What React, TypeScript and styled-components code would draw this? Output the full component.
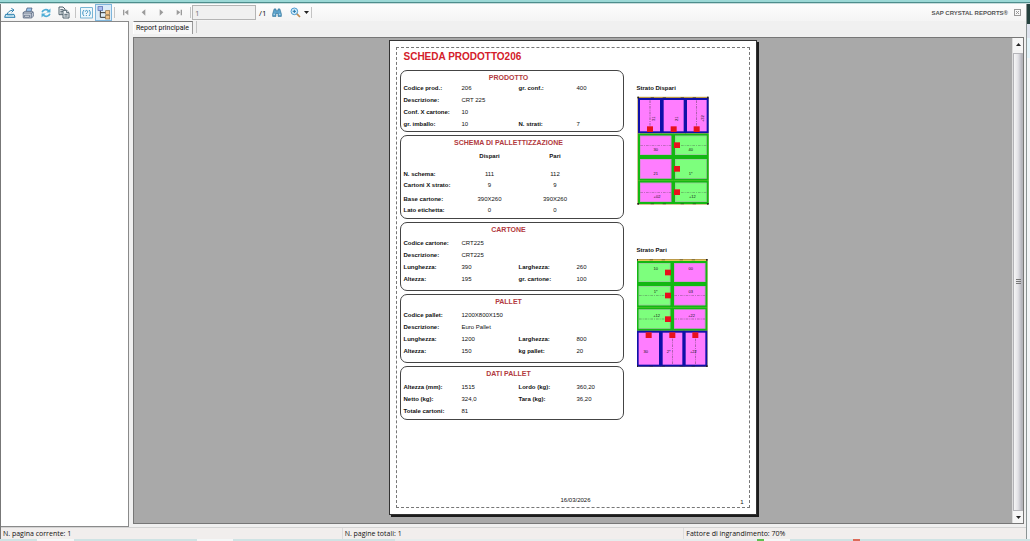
import React from 'react';
import styled, { createGlobalStyle } from 'styled-components';

const Global = createGlobalStyle`
  * { box-sizing: border-box; }
  html, body { margin: 0; padding: 0; }
  body { font-family: "Open Sans", "Noto Sans", sans-serif; font-size: 7px; color: #111; background: #f0f0f0; }
  button, input { font: inherit; color: inherit; margin: 0; }
`;

const Desktop = styled.div`
  display: flex;
  flex-direction: column;
  min-height: 100vh;
`;

const TopEdge = styled.div`
  height: 4px;
  flex: none;
  background: linear-gradient(#9bd8d6 0 2px, #4d8d8c 2px 3px, #c8dcdc 3px 4px);
`;

const Middle = styled.div`
  display: flex;
  flex: 1;
`;

const Window = styled.main`
  display: flex;
  flex-direction: column;
  flex: 1;
  min-width: 0;
  background: #f0f0f0;
  border-left: 1px solid #777;
  border-right: 1px solid #8b9494;
`;

const SideEdge = styled.div`
  width: 3px;
  flex: none;
  background: linear-gradient(#24403d 0 20px, #dfe3ee 20px 34px, #e4f3f9 34px 54px, #f3f5f7 54px);
`;

const BottomEdge = styled.div`
  height: 2px;
  flex: none;
  background: linear-gradient(90deg, #cfe3e4 0 37px, #f4f7f7 37px 74px, #cfe3e4 74px 197px, #f4f7f7 197px 233px, #cfe3e4 233px 395px, #e6eded 395px 757px, #5fc04f 757px 764px, #f4f7f7 764px 790px, #cfe3e4 790px 853px, #dc6a58 853px 860px, #cfe3e4 860px);
`;

const Toolbar = styled.div`
  display: flex;
  align-items: center;
  height: 17px;
  flex: none;
  padding-right: 5px;
  background: linear-gradient(#fdfdfd, #f4f4f4);
`;

const ToolButton = styled.button<{ $active?: boolean }>`
  display: flex;
  align-items: center;
  justify-content: center;
  width: ${(p) => (p.$active ? 17 : 18)}px;
  height: 17px;
  padding: 0;
  border: 1px solid ${(p) => (p.$active ? '#7fb6dc' : 'transparent')};
  background: ${(p) => (p.$active ? '#dcecf8' : 'transparent')};
  svg { display: block; flex: none; }
`;

const Divider = styled.span`
  width: 1px;
  height: 11px;
  margin: 0 1px 0 2px;
  background: #c4c4c4;
`;

const PageInput = styled.input`
  width: 64px;
  height: 15px;
  padding: 0 2px;
  border: 1px solid #b4b4b4;
  background: #f0f0f0;
  color: #777;
  font-size: 8px;
`;

const PageTotal = styled.span`
  width: 12px;
  padding-left: 3px;
  font-size: 8px;
`;

const Brand = styled.span`
  margin-left: auto;
  margin-right: 6px;
  font: bold 6px "Liberation Sans", Arial, sans-serif;
  color: #555;
  white-space: nowrap;
`;

const CloseButton = styled.button`
  width: 7px;
  height: 7px;
  padding: 0;
  border: 0;
  background: none;
  svg { display: block; }
`;

const Body = styled.div`
  display: flex;
  flex: 1;
`;

const TreePanel = styled.aside`
  width: 128px;
  flex: none;
  background: #fff;
  border: 1px solid #8a8a8a;
  border-left: 0;
`;

const Content = styled.section`
  display: flex;
  flex-direction: column;
  flex: 1;
  min-width: 0;
  padding: 0 2px 3px 4px;
`;

const TabBar = styled.div`
  display: flex;
  height: 16px;
  flex: none;
`;

const Tab = styled.button`
  height: 13px;
  padding: 0 3px 0 2px;
  border: 0;
  border-left: 1px solid #fff;
  border-top: 1px solid #777;
  border-right: 1px solid #999;
  background: #f7f7f7;
  font-family: Roboto, sans-serif;
  line-height: 12px;
  white-space: nowrap;
`;

const TabEnd = styled.span`
  width: 1px;
  height: 12px;
  margin-left: 3px;
  background: #c4c4c4;
`;

const Viewer = styled.div`
  display: flex;
  flex: 1;
  border: 1px solid #777;
`;

const Canvas = styled.div`
  display: flex;
  flex: 1;
  justify-content: center;
  align-items: flex-start;
  padding: 2px 1px 6px 0;
  background: #a9a9a9;
`;

const ScrollBar = styled.div`
  display: flex;
  flex-direction: column;
  width: 11px;
  flex: none;
  background: #f3f3f3;
  border-left: 1px solid #dcdcdc;
`;

const ScrollButton = styled.button`
  height: 12px;
  padding: 0;
  border: 0;
  background: #f6f6f6;
  svg { display: block; margin: 0 auto; }
`;

const Thumb = styled.div`
  display: flex;
  align-items: center;
  justify-content: center;
  flex: 1;
  margin-top: 3px;
  border: 1px solid #b4b4b8;
  background: linear-gradient(90deg, #f6f6f6, #e2e2e6 50%, #b2b2ba);
`;

const Paper = styled.article`
  width: 368px;
  padding: 6px;
  background: #fff;
  border: 1px solid #333;
  box-shadow: 2px 2px 0 #1c1c1c;
  font-family: "Liberation Sans", Arial, sans-serif;
  font-size: 6px;
  color: #111;
`;

const Margins = styled.div`
  display: flex;
  flex-direction: column;
  height: 461px;
  padding: 4px 3px 0;
  border: 1px dashed #777;
`;

const Title = styled.h1`
  margin: 0 4px 8px;
  font-size: 10px;
  line-height: 10px;
  color: #d3202a;
`;

const Columns = styled.div`
  display: flex;
  gap: 13px;
`;

const Sections = styled.div`
  display: flex;
  flex-direction: column;
  gap: 3px;
  width: 224px;
`;

const Box = styled.section<{ $height: number }>`
  min-height: ${(p) => p.$height}px;
  padding: 2px 3px 0;
  border: 1px solid #444;
  border-radius: 7px;
`;

const BoxTitle = styled.h2<{ $gap: number }>`
  margin: 0 0 ${(p) => p.$gap}px 0;
  padding-right: 6px;
  font-size: 7px;
  line-height: 10px;
  text-align: center;
  color: #b23a40;
`;

const Fields = styled.dl`
  display: grid;
  grid-template-columns: 58px 57px 58px 1fr;
  grid-auto-rows: 12px;
  margin: 0;
  line-height: 12px;
  white-space: nowrap;
`;

const Term = styled.dt<{ $col: number }>`
  grid-column: ${(p) => p.$col};
  font-weight: bold;
`;

const Value = styled.dd<{ $col: number }>`
  grid-column: ${(p) => p.$col};
  margin: 0;
`;

const SchemaTable = styled.table`
  width: 184px;
  border-collapse: collapse;
  table-layout: fixed;
  line-height: 11px;
  white-space: nowrap;
  th, td { padding: 0; text-align: center; vertical-align: top; }
  tbody th { text-align: left; }
`;

const SchemaRow = styled.tr<{ $height: number }>`
  height: ${(p) => p.$height}px;
`;

const Diagrams = styled.div`
  padding-top: 13px;
`;

const Figure = styled.figure`
  height: 162px;
  margin: 0;
  svg { display: block; }
`;

const Caption = styled.figcaption`
  height: 13px;
  line-height: 10px;
  font-weight: bold;
`;

const Footer = styled.footer`
  display: grid;
  grid-template-columns: 1fr auto 1fr;
  margin-top: auto;
  line-height: 10px;
  padding: 0 2px 0 8px;
`;

const PrintDate = styled.span`
  padding-bottom: 2px;
`;

const PageNumber = styled.span`
  align-self: end;
  text-align: right;
`;

const StatusBar = styled.footer`
  display: grid;
  grid-template-columns: 1fr 1fr 1fr;
  height: 12px;
  flex: none;
  line-height: 12px;
  background: #f1eeed;
  border-top: 1px solid #d4d4d4;
`;

const StatusCell = styled.span`
  padding-left: 2px;
  border-right: 1px solid #dcdcdc;
  white-space: nowrap;
  &:last-child { border-right: 0; }
`;

type Item = [string, string, (string | undefined)?, (string | undefined)?];

function Details({ title, rows, height, gap }: { title: string; rows: Item[]; height: number; gap: number }) {
  return (
    <Box $height={height}>
      <BoxTitle $gap={gap}>{title}</BoxTitle>
      <Fields>
        {rows.map(([a, b, c, d]) => (
          <React.Fragment key={a}>
            <Term $col={1}>{a}</Term>
            <Value $col={2}>{b}</Value>
            {c && <Term $col={3}>{c}</Term>}
            {c && <Value $col={4}>{d}</Value>}
          </React.Fragment>
        ))}
      </Fields>
    </Box>
  );
}

const PINK = '#ff7dff';
const GREEN = '#7dff7d';
const NAVY = '#1010a8';
const LEAF = '#12b812';

interface Carton {
  x: number; y: number; w: number; h: number;
  fill: string; stroke: string;
  tag: [number, number]; label: string; at: [number, number];
  turn?: boolean; dash?: 'h' | 'v'; dashAt?: number;
}

function Layer({ cartons, viewBox, edge, title }: { cartons: Carton[]; viewBox: string; edge: [number, number]; title: string }) {
  return (
    <svg width="72" height="109" viewBox={viewBox} role="img" aria-label={title}>
      <rect x={edge[0]} y={edge[1]} width="210" height="320" fill="#e8d860" stroke="#b08a30" strokeWidth="3" />
      {cartons.map((c, i) => (
        <g key={i}>
          <rect x={c.x} y={c.y} width={c.w} height={c.h} fill={c.fill} stroke={c.stroke} strokeWidth="6" />
          {c.stroke === LEAF && (
            <rect x={c.x + 4} y={c.y + 4} width={c.w - 8} height={c.h - 8} fill="none" stroke="#b0a0b0" strokeWidth="2" opacity="0.7" />
          )}
          {c.dash === 'h' && (
            <line x1={c.x + 4} x2={c.x + c.w - 4} y1={c.dashAt} y2={c.dashAt} stroke="#444" strokeWidth="2" strokeDasharray="8 3 3 3" opacity="0.6" />
          )}
          {c.dash === 'v' && (
            <line y1={c.y + 4} y2={c.y + c.h - 4} x1={c.dashAt} x2={c.dashAt} stroke="#333" strokeWidth="2" strokeDasharray="8 3 3 3" opacity="0.7" />
          )}
          {c.tag[0] > 0 && <rect x={c.tag[0] - 9} y={c.tag[1] - 8} width="18" height="17" fill="#e8101c" />}
          <text
            x={c.at[0]} y={c.at[1] + 4} fontSize="12" textAnchor="middle" fill="#111"
            transform={c.turn ? `rotate(-90 ${c.at[0]} ${c.at[1]})` : undefined}
          >{c.label}</text>
        </g>
      ))}
      {[0, 1].map((k) => (
        <g key={k} fill="#222">
          <rect x={edge[0] - 2} y={edge[1] - 2 + k * 319} width="5" height="5" />
          <rect x={edge[0] + 207} y={edge[1] - 2 + k * 319} width="5" height="5" />
          {[38, 74, 128, 164].map((d) => (
            <rect key={d} x={edge[0] + d} y={edge[1] - 1 + k * 319} width="10" height="3" opacity="0.45" />
          ))}
        </g>
      ))}
    </svg>
  );
}

const dispari: Carton[] = [
  { x: 42, y: 72, w: 66, h: 100, fill: PINK, stroke: NAVY, tag: [75, 162], label: '31', at: [85, 131], turn: true, dash: 'v', dashAt: 75 },
  { x: 113, y: 72, w: 66, h: 100, fill: PINK, stroke: NAVY, tag: [146, 162], label: '21', at: [155, 131], turn: true },
  { x: 183, y: 72, w: 65, h: 100, fill: PINK, stroke: NAVY, tag: [215, 162], label: '+32', at: [232, 131], turn: true, dash: 'v', dashAt: 215 },
  { x: 42, y: 179, w: 100, h: 64, fill: PINK, stroke: LEAF, tag: [0, 0], label: '30', at: [92, 223], dash: 'h', dashAt: 211 },
  { x: 147, y: 179, w: 101, h: 64, fill: GREEN, stroke: LEAF, tag: [156, 210], label: '40', at: [197, 223], dash: 'h', dashAt: 211 },
  { x: 42, y: 249, w: 100, h: 65, fill: PINK, stroke: LEAF, tag: [0, 0], label: '21', at: [92, 295] },
  { x: 147, y: 249, w: 101, h: 65, fill: GREEN, stroke: LEAF, tag: [156, 281], label: '1*', at: [197, 295] },
  { x: 42, y: 320, w: 100, h: 64, fill: PINK, stroke: LEAF, tag: [0, 0], label: '+02', at: [96, 366], dash: 'h', dashAt: 352 },
  { x: 147, y: 320, w: 101, h: 64, fill: GREEN, stroke: LEAF, tag: [156, 351], label: '+12', at: [202, 366], dash: 'h', dashAt: 352 },
];

const pari: Carton[] = [
  { x: 38, y: 66, w: 101, h: 63, fill: GREEN, stroke: LEAF, tag: [129, 97], label: '10', at: [92, 86] },
  { x: 144, y: 66, w: 100, h: 63, fill: PINK, stroke: LEAF, tag: [0, 0], label: '00', at: [197, 86] },
  { x: 38, y: 135, w: 101, h: 64, fill: GREEN, stroke: LEAF, tag: [129, 166], label: '1*', at: [92, 156], dash: 'h', dashAt: 167 },
  { x: 144, y: 135, w: 100, h: 64, fill: PINK, stroke: LEAF, tag: [0, 0], label: '03', at: [197, 156], dash: 'h', dashAt: 167 },
  { x: 38, y: 205, w: 101, h: 64, fill: GREEN, stroke: LEAF, tag: [129, 237], label: '+12', at: [95, 226], dash: 'h', dashAt: 237 },
  { x: 144, y: 205, w: 100, h: 64, fill: PINK, stroke: LEAF, tag: [0, 0], label: '+22', at: [200, 226], dash: 'h', dashAt: 237 },
  { x: 38, y: 275, w: 67, h: 102, fill: PINK, stroke: NAVY, tag: [71, 285], label: '30', at: [62, 335] },
  { x: 110, y: 275, w: 65, h: 102, fill: PINK, stroke: NAVY, tag: [142, 285], label: '2*', at: [131, 335], dash: 'v', dashAt: 142 },
  { x: 179, y: 275, w: 65, h: 102, fill: PINK, stroke: NAVY, tag: [211, 285], label: '+22', at: [205, 335], dash: 'v', dashAt: 211 },
];

const ExportIcon = () => (
  <svg width="12" height="12" viewBox="0 0 36 36" fill="none" stroke="#2b7fae" strokeWidth="3">
    <path d="M5 22 L2 31 H33 L30 22 Z" fill="#d5ecf6" />
    <path d="M9 23 C12 14 18 10 26 10" />
    <path d="M22 4 L30 9 L23 16" />
    <path d="M10 26 H26" stroke="#7db9d4" strokeWidth="2" />
  </svg>
);
const PrintIcon = () => (
  <svg width="12" height="12" viewBox="0 0 36 36" stroke="#3c4f6b" strokeWidth="2">
    <path d="M12 14 L15 3 H30 L27 14 Z" fill="#9cc6ee" />
    <path d="M3 17 L9 13 H31 L34 17 V28 L28 33 H4 Z" fill="#cfd6df" />
    <path d="M3 18 H28 V32 M28 18 L34 15" fill="none" />
    <path d="M7 25 H23 V30 H7 Z" fill="#fff" />
  </svg>
);
const RefreshIcon = () => (
  <svg width="10" height="10" viewBox="0 0 36 36" fill="none" stroke="#4fadd6" strokeWidth="6">
    <path d="M4 15 C7 5 20 3 28 10" /><path d="M34 2 V16 H19 Z" fill="#4fadd6" stroke="none" />
    <path d="M32 21 C29 31 16 33 8 26" /><path d="M2 34 V20 H17 Z" fill="#4fadd6" stroke="none" />
  </svg>
);
const CopyIcon = () => (
  <svg width="12" height="13" viewBox="0 0 36 39" fill="#f3f6f8" stroke="#51626d" strokeWidth="3">
    <path d="M3 3 H15 L21 9 V26 H3 Z" /><path d="M7 11 H16 M7 16 H16 M7 21 H13" />
    <path d="M15 13 H26 L33 20 V36 H15 Z" /><path d="M26 13 V20 H33 M19 25 H29 M19 30 H29" />
  </svg>
);
const ParamIcon = () => (
  <svg width="13" height="12" viewBox="0 0 39 36" fill="none" stroke="#3b93c2" strokeWidth="2">
    <rect x="2" y="2" width="35" height="31" fill="#eef8fd" />
    <path d="M12 9 C7 14 7 22 12 27 M27 9 C32 14 32 22 27 27" strokeWidth="3" />
    <path d="M16 14 C16 9 23 9 23 14 C23 17 19 17 19 21 M19 24 V27" strokeWidth="3" />
  </svg>
);
const TreeIcon = () => (
  <svg width="14" height="14" viewBox="0 0 42 42" stroke="#555" strokeWidth="2" fill="none">
    <path d="M10 13 V34 H26 M10 20 H26" stroke="#333" strokeWidth="3" />
    <rect x="3" y="2" width="14" height="11" fill="#a9bdf0" stroke="#4b62a5" />
    <rect x="26" y="14" width="12" height="11" fill="#f2c48a" stroke="#8d6a3c" />
    <rect x="26" y="28" width="12" height="11" fill="#f2c48a" stroke="#8d6a3c" />
  </svg>
);
const NavIcon = ({ back, bar }: { back?: boolean; bar?: boolean }) => (
  <svg width="7" height="7" viewBox="0 0 21 21" fill="#9b9b9b">
    <g transform={back ? 'translate(21 0) scale(-1 1)' : undefined}>
      <path d={bar ? 'M2 2 L13 10 L2 19 Z' : 'M5 1 L16 10 L5 20 Z'} />
      {bar && <path d="M14 2 H18 V19 H14 Z" />}
    </g>
  </svg>
);
const FindIcon = () => (
  <svg width="10" height="9" viewBox="0 0 33 30" fill="#5fa5cd" stroke="#23688f" strokeWidth="2">
    <path d="M7 3 H13 V9 H20 V3 H26 L31 20 V28 H20 V18 H13 V28 H2 V20 Z" />
    <path d="M5 21 H10 M23 21 H28" stroke="#c8e6f5" strokeWidth="3" />
  </svg>
);
const ZoomIcon = () => (
  <svg width="11" height="11" viewBox="0 0 33 33" fill="none">
    <path d="M20 20 L30 30" stroke="#c08a50" strokeWidth="5" />
    <circle cx="13" cy="13" r="10" fill="#d6eefa" stroke="#4a9bd0" strokeWidth="3" />
    <path d="M13 8 V18 M8 13 H18" stroke="#2878ad" strokeWidth="3" />
  </svg>
);
const Triangle = ({ up }: { up?: boolean }) => (
  <svg width="5" height="3" viewBox="0 0 10 6"><path d={up ? 'M0 6 L5 0 L10 6 Z' : 'M0 0 H10 L5 6 Z'} fill="#222" /></svg>
);

export default function App() {
  return (
    <Desktop>
      <Global />
      <TopEdge />
      <Middle>
        <Window>
          <Toolbar role="toolbar" aria-label="Report">
            <ToolButton aria-label="Esporta"><ExportIcon /></ToolButton>
            <ToolButton aria-label="Stampa"><PrintIcon /></ToolButton>
            <ToolButton aria-label="Aggiorna"><RefreshIcon /></ToolButton>
            <ToolButton aria-label="Copia"><CopyIcon /></ToolButton>
            <Divider />
            <ToolButton aria-label="Parametri"><ParamIcon /></ToolButton>
            <ToolButton $active aria-label="Struttura gruppi" aria-pressed="true"><TreeIcon /></ToolButton>
            <Divider />
            <ToolButton aria-label="Prima pagina"><NavIcon back bar /></ToolButton>
            <ToolButton aria-label="Pagina precedente"><NavIcon back /></ToolButton>
            <ToolButton aria-label="Pagina successiva"><NavIcon /></ToolButton>
            <ToolButton aria-label="Ultima pagina"><NavIcon bar /></ToolButton>
            <Divider />
            <PageInput aria-label="Pagina" defaultValue="1" />
            <PageTotal>/1</PageTotal>
            <ToolButton aria-label="Trova"><FindIcon /></ToolButton>
            <ToolButton aria-label="Zoom"><ZoomIcon /></ToolButton>
            <Triangle />
            <Divider />
            <Brand>SAP CRYSTAL REPORTS®</Brand>
            <CloseButton aria-label="Chiudi">
              <svg width="7" height="7" viewBox="0 0 14 14" fill="none" stroke="#999" strokeWidth="2">
                <rect x="1" y="1" width="12" height="12" /><path d="M4 4 L10 10 M10 4 L4 10" />
              </svg>
            </CloseButton>
          </Toolbar>
          <Body>
            <TreePanel />
            <Content>
              <TabBar role="tablist"><Tab role="tab" aria-selected="true">Report principale</Tab><TabEnd /></TabBar>
              <Viewer>
                <Canvas>
                  <Paper>
                    <Margins>
                      <Title>SCHEDA PRODOTTO206</Title>
                      <Columns>
                        <Sections>
                          <Details title="PRODOTTO" height={62} gap={-1} rows={[
                            ['Codice prod.:', '206', 'gr. conf.:', '400'],
                            ['Descrizione:', 'CRT 225'],
                            ['Conf. X cartone:', '10'],
                            ['gr. imballo:', '10', 'N. strati:', '7'],
                          ]} />
                          <Box $height={84}>
                            <BoxTitle $gap={3}>SCHEMA DI PALLETTIZZAZIONE</BoxTitle>
                            <SchemaTable>
                              <colgroup><col width="53" /><col width="66" /><col width="65" /></colgroup>
                              <thead><SchemaRow $height={18}><td /><th>Dispari</th><th>Pari</th></SchemaRow></thead>
                              <tbody>
                                <SchemaRow $height={11}><th>N. schema:</th><td>111</td><td>112</td></SchemaRow>
                                <SchemaRow $height={14}><th>Cartoni X strato:</th><td>9</td><td>9</td></SchemaRow>
                                <SchemaRow $height={11}><th>Base cartone:</th><td>390X260</td><td>390X260</td></SchemaRow>
                                <SchemaRow $height={11}><th>Lato etichetta:</th><td>0</td><td>0</td></SchemaRow>
                              </tbody>
                            </SchemaTable>
                          </Box>
                          <Details title="CARTONE" height={69} gap={2} rows={[
                            ['Codice cartone:', 'CRT225'],
                            ['Descrizione:', 'CRT225'],
                            ['Lunghezza:', '390', 'Larghezza:', '260'],
                            ['Altezza:', '195', 'gr. cartone:', '100'],
                          ]} />
                          <Details title="PALLET" height={69} gap={2} rows={[
                            ['Codice pallet:', '1200X800X150'],
                            ['Descrizione:', 'Euro Pallet'],
                            ['Lunghezza:', '1200', 'Larghezza:', '800'],
                            ['Altezza:', '150', 'kg pallet:', '20'],
                          ]} />
                          <Details title="DATI PALLET" height={54} gap={2} rows={[
                            ['Altezza (mm):', '1515', 'Lordo (kg):', '360,20'],
                            ['Netto (kg):', '324,0', 'Tara (kg):', '36,20'],
                            ['Totale cartoni:', '81'],
                          ]} />
                        </Sections>
                        <Diagrams>
                          <Figure>
                            <Caption>Strato Dispari</Caption>
                            <Layer title="Strato Dispari" cartons={dispari} viewBox="36 63 216 327" edge={[39, 67]} />
                          </Figure>
                          <Figure>
                            <Caption>Strato Pari</Caption>
                            <Layer title="Strato Pari" cartons={pari} viewBox="36 54 216 327" edge={[36, 59]} />
                          </Figure>
                        </Diagrams>
                      </Columns>
                      <Footer><span /><PrintDate>16/03/2026</PrintDate><PageNumber>1</PageNumber></Footer>
                    </Margins>
                  </Paper>
                </Canvas>
                <ScrollBar>
                  <ScrollButton aria-label="Su"><Triangle up /></ScrollButton>
                  <Thumb>
                    <svg width="5" height="6" viewBox="0 0 10 12"><path d="M0 1 H10 M0 5 H10 M0 9 H10" stroke="#777" strokeWidth="2" /></svg>
                  </Thumb>
                  <ScrollButton aria-label="Giù"><Triangle /></ScrollButton>
                </ScrollBar>
              </Viewer>
            </Content>
          </Body>
          <StatusBar>
            <StatusCell>N. pagina corrente: 1</StatusCell>
            <StatusCell>N. pagine totali: 1</StatusCell>
            <StatusCell>Fattore di ingrandimento: 70%</StatusCell>
          </StatusBar>
        </Window>
        <SideEdge />
      </Middle>
      <BottomEdge />
    </Desktop>
  );
}
